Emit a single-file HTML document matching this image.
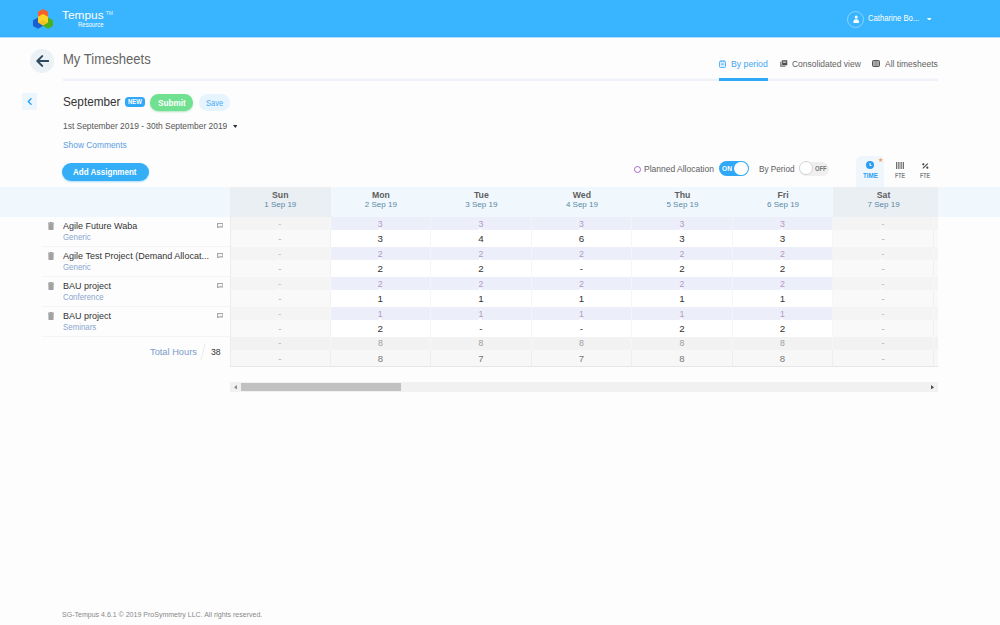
<!DOCTYPE html>
<html lang="en">
<head>
<meta charset="utf-8">
<title>My Timesheets - Tempus Resource</title>
<style>
*{box-sizing:border-box;margin:0;padding:0}
html,body{width:1000px;height:625px;overflow:hidden;background:#fdfdfd}
body{position:relative;font-family:"Liberation Sans",sans-serif;color:#333;font-size:9px;line-height:1}
.a{position:absolute;white-space:nowrap}
.topbar{left:0;top:0;width:1000px;height:38px;background:linear-gradient(#39b4fe 0,#39b4fe 36px,#32aefa 36px,#32aefa 37px,#b4e2ff 37px,#b4e2ff 38px)}
.w{color:#fff}
/* table */
.hdr{left:0;top:187px;width:1000px;height:29.5px;background:#f0f8fd}
.hc{top:187px;height:30px;width:100.55px;text-align:center}
.hc.we{background:#e9eff3}
.hc b{position:absolute;left:0;right:0;top:4px;font-size:8.7px;font-weight:bold;color:#5e5e5e;display:block}
.hc i{position:absolute;left:0;right:0;top:14.2px;font-size:8px;font-style:normal;color:#5a88a6;display:block}
.row{left:230px;width:708px;overflow:hidden}
.row span{position:absolute;top:0;height:100%;width:100.55px;text-align:center;border-right:1px solid rgba(255,255,255,.3)}
.p span::after{content:"";position:absolute;left:50%;bottom:0;margin-left:-2.6px;border:2.6px solid transparent;border-bottom:2px solid #fff;border-top:0}
.p span.we::after{border-bottom-color:#f9f9f9}
.p{height:13px;font-size:8.8px;color:#b498c5;line-height:14px}
.p span{background:#eceffa}
.p span.we,.p span.x{background:#f4f4f4;color:#b8b8b8}
.v{height:17px;font-size:9.8px;color:#333;line-height:17px}
.v span{background:#fff;border-right:1px solid #f6f6f6}
.v span.we,.v span.x{background:#f9f9f9;color:#adadad;border-right:1px solid #f1f1f1}
.t1{height:13px;font-size:8.7px;color:#9c9c9c;line-height:13.6px}
.t1 span{background:#f2f2f2}
.t2{height:17px;font-size:9.6px;color:#777;line-height:17.4px}
.t2 span{background:#f7f7f7;border-right:1px solid #ededed}
.t1 .c0,.t1 .c6,.t1 .c7,.t2 .c0,.t2 .c6,.t2 .c7{color:#aaa}
.c0{left:0}.c1{left:100.55px}.c2{left:201.1px}.c3{left:301.65px}.c4{left:402.2px}.c5{left:502.75px}.c6{left:603.3px}.c7{left:703.85px}
.nm{left:62.5px;font-size:9.3px;color:#333}
.sb{left:62.5px;font-size:8.4px;color:#8aa6cf;transform:scaleX(.94);transform-origin:0 0}
.sep{left:42px;width:188px;height:1px;background:#f4f4f4}
</style>
</head>
<body>
<!-- top bar -->
<div class="a topbar"></div>
<svg class="a" style="left:33px;top:9px" width="20" height="20" viewBox="0 0 20 20">
  <polygon points="10,0 15,2.8 15,8.6 10,11.4 5,8.6 5,2.8" fill="#f4622a"/>
  <polygon points="5,8.4 10,11.2 10,17 5,19.8 0,17 0,11.2" fill="#1a5fd0"/>
  <polygon points="15,8.4 20,11.2 20,17 15,19.8 10,17 10,11.2" fill="#4caf1c"/>
  <polygon points="10,5 15,7.8 15,13.6 10,16.4 5,13.6 5,7.8" fill="#fdd328"/>
  <polygon points="5,13.6 10,10.9 15,13.6 10,16.4" fill="#e8b820" opacity=".55"/>
</svg>
<span class="a w" id="tempus" style="left:62.4px;top:9.6px;font-size:11.5px;transform:scaleX(1.0327);transform-origin:0 0">Tempus</span>
<span class="a w" id="tm" style="left:105.8px;top:10.8px;font-size:5px;opacity:.85">TM</span>
<span class="a w" id="resource" style="left:78px;top:22.4px;font-size:6.5px;transform:scaleX(0.9235);transform-origin:0 0">Resource</span>

<!-- user -->
<div class="a" style="left:847px;top:10.5px;width:17px;height:17px;border-radius:50%;border:1px solid rgba(255,255,255,.4)"></div>
<svg class="a" style="left:852.8px;top:14.6px" width="6.4" height="8.6" viewBox="0 0 8 10" preserveAspectRatio="none"><circle cx="4" cy="2.4" r="1.9" fill="#fff"/><path d="M0.6 9.2 V7.2 Q0.6 5 4 5 Q7.4 5 7.4 7.2 V9.2 Z" fill="#fff"/></svg>
<span class="a w" id="user" style="left:867.5px;top:14px;font-size:8.6px;transform:scaleX(0.8931);transform-origin:0 0">Catharine Bo...</span>
<svg class="a" style="left:926.6px;top:17.5px" width="4.6" height="2.8" viewBox="0 0 4.6 2.8"><path d="M.2 0H4.4L2.3 2.7Z" fill="#fff" stroke="#fff" stroke-width=".4" stroke-linejoin="round"/></svg>

<!-- title row -->
<div class="a" style="left:30px;top:49px;width:23.5px;height:23.5px;border-radius:50%;background:#ecf1f5"></div>
<svg class="a" style="left:35.5px;top:55px" width="13" height="12" viewBox="0 0 13 12"><path d="M6.2 1.1 L1.3 6 L6.2 10.9 M1.6 6 H12.2" fill="none" stroke="#2f4a5e" stroke-width="2" stroke-linecap="round" stroke-linejoin="round"/></svg>
<span class="a" id="title" style="left:62.7px;top:52px;font-size:14.2px;color:#646464;transform:scaleX(0.9192);transform-origin:0 0">My Timesheets</span>
<div class="a" style="left:62.5px;top:78px;width:875px;height:3px;background:linear-gradient(#f7f9fc 0,#f7f9fc 1px,#eef1f7 1px,#eef1f7 3px)"></div>
<div class="a" style="left:719px;top:78px;width:49px;height:3px;background:#2fa9f7"></div>

<!-- tabs -->
<svg class="a" style="left:719px;top:60px" width="7" height="8" viewBox="0 0 7 8"><rect x=".5" y="1.2" width="6" height="6.3" rx="1" fill="#d9edfd" stroke="#55b2f6" stroke-width="1"/><rect x="1.6" y="0" width="1" height="2" fill="#55b2f6"/><rect x="4.4" y="0" width="1" height="2" fill="#55b2f6"/><rect x="2" y="3.6" width="3" height="1" fill="#55b2f6"/></svg>
<span class="a" id="tab1" style="left:731.2px;top:59.5px;font-size:9.2px;color:#44a6f2;transform:scaleX(0.9478);transform-origin:0 0">By period</span>
<svg class="a" style="left:780px;top:60px" width="7.5" height="7.5" viewBox="0 0 7.5 7.5"><rect x="0" y="1.6" width="5.6" height="5.4" rx=".8" fill="#8e8e8e"/><rect x="1.7" y="0" width="5.8" height="5.6" rx=".8" fill="#4b4b4b" stroke="#fff" stroke-width=".5"/><rect x="3" y="1.4" width="3.2" height="1.6" fill="#bbb"/></svg>
<span class="a" id="tab2" style="left:792px;top:59.5px;font-size:9.2px;color:#626262;transform:scaleX(0.9225);transform-origin:0 0">Consolidated view</span>
<svg class="a" style="left:872px;top:60px" width="8" height="7" viewBox="0 0 8 7"><rect x=".5" y=".5" width="7" height="6" rx=".9" fill="#a8a8a8" stroke="#555" stroke-width="1"/><rect x="3.7" y="1" width=".6" height="5" fill="#777"/></svg>
<span class="a" id="tab3" style="left:884.5px;top:59.5px;font-size:9.2px;color:#626262;transform:scaleX(0.923);transform-origin:0 0">All timesheets</span>

<!-- period header -->
<div class="a" style="left:22px;top:92.5px;width:15px;height:17.5px;background:#edf6fd"></div>
<svg class="a" style="left:27px;top:98px" width="5" height="7" viewBox="0 0 5 7"><path d="M4 .8 L1.3 3.5 L4 6.2" fill="none" stroke="#2a9df4" stroke-width="1.4" stroke-linecap="round" stroke-linejoin="round"/></svg>
<span class="a" id="sept" style="left:63.4px;top:95.5px;font-size:12px;color:#333;transform:scaleX(0.9778);transform-origin:0 0">September</span>
<div class="a" style="left:125px;top:97px;width:19.5px;height:9.5px;border-radius:3.5px;background:#2fa9f7"></div>
<span class="a w" id="new" style="left:127.8px;top:98.6px;font-size:6.4px;font-weight:bold;transform:scaleX(0.9382);transform-origin:0 0">NEW</span>
<div class="a" style="left:150.3px;top:93.5px;width:42.4px;height:17.6px;border-radius:9px;background:#70e091;box-shadow:0 1px 2px rgba(90,200,120,.45)"></div>
<span class="a w" id="submit" style="left:157.9px;top:97.8px;font-size:9.4px;font-weight:bold;transform:scaleX(0.8716);transform-origin:0 0">Submit</span>
<div class="a" style="left:199px;top:94px;width:30.5px;height:17px;border-radius:9px;background:#e6f4fe"></div>
<span class="a" id="save" style="left:205.6px;top:98px;font-size:9.4px;color:#4ba9f1;transform:scaleX(0.8);transform-origin:0 0">Save</span>
<span class="a" id="dates" style="left:62.7px;top:122px;font-size:9px;color:#555;transform:scaleX(0.9355);transform-origin:0 0">1st September 2019 - 30th September 2019</span>
<svg class="a" style="left:232.8px;top:125.2px" width="4.6" height="3" viewBox="0 0 4.6 3"><path d="M0 0H4.6L2.3 3Z" fill="#333"/></svg>
<span class="a" id="showc" style="left:62.7px;top:140.5px;font-size:9px;color:#5b9ce2;transform:scaleX(0.9295);transform-origin:0 0">Show Comments</span>
<div class="a" style="left:62.4px;top:163px;width:86.8px;height:17.5px;border-radius:9px;background:#34aef6;box-shadow:0 1px 2px rgba(52,174,246,.4)"></div>
<span class="a w" id="adda" style="left:73.3px;top:167.5px;font-size:8.8px;font-weight:bold;transform:scaleX(0.9126);transform-origin:0 0">Add Assignment</span>

<!-- toggles -->
<div class="a" style="left:633.6px;top:166px;width:7.2px;height:7.2px;border-radius:50%;border:1.7px solid #a36bd3"></div>
<span class="a" id="planned" style="left:643.7px;top:164.5px;font-size:9px;color:#606060;transform:scaleX(0.9438);transform-origin:0 0">Planned Allocation</span>
<div class="a" style="left:718.5px;top:160.5px;width:30.5px;height:15px;border-radius:8px;background:#2fa9f7"></div>
<div class="a" style="left:734px;top:161.5px;width:13.5px;height:13.5px;border-radius:50%;background:#fff"></div>
<span class="a w" id="on" style="left:721.6px;top:165.7px;font-size:6.8px;font-weight:bold;transform:scaleX(0.9703);transform-origin:0 0">ON</span>
<span class="a" id="byp" style="left:758.5px;top:164.5px;font-size:9px;color:#606060;transform:scaleX(0.9095);transform-origin:0 0">By Period</span>
<div class="a" style="left:799px;top:161.5px;width:29.5px;height:14px;border-radius:7px;background:#efefef"></div>
<div class="a" style="left:799.3px;top:161.3px;width:14.2px;height:14.2px;border-radius:50%;background:#fff;border:1px solid #d4d4d4"></div>
<span class="a" id="off" style="left:814.5px;top:165.7px;font-size:6.8px;font-weight:bold;color:#777;transform:scaleX(0.8607);transform-origin:0 0">OFF</span>

<!-- view switch -->
<div class="a" style="left:856.4px;top:156px;width:27.8px;height:32px;border-radius:5px 5px 0 0;background:#eff7fd"></div>
<svg class="a" style="left:866.2px;top:161px" width="8" height="8" viewBox="0 0 8 8"><circle cx="4" cy="4" r="4" fill="#2a9df4"/><path d="M4 2V4.5H5.5" fill="none" stroke="#fff" stroke-width="1"/></svg>
<span class="a" style="left:877.5px;top:157px;font-size:6px;color:#f5a14a">★</span>
<span class="a" id="time" style="left:862.5px;top:173.3px;font-size:6.6px;font-weight:bold;color:#2a9df4;transform:scaleX(0.9451);transform-origin:0 0">TIME</span>
<svg class="a" style="left:896px;top:161.6px" width="8" height="7.3" viewBox="0 0 8 7.3"><rect x="0" width="1.3" height="7.3" fill="#707070"/><rect x="2.2" width="1.3" height="7.3" fill="#707070"/><rect x="4.5" width="1.3" height="7.3" fill="#707070"/><rect x="6.7" width="1.3" height="7.3" fill="#707070"/></svg>
<span class="a" id="fte1" style="left:894.9px;top:173.3px;font-size:6.6px;font-weight:bold;color:#828282;transform:scaleX(0.794);transform-origin:0 0">FTE</span>
<svg class="a" style="left:922.3px;top:162.5px" width="6.6" height="6" viewBox="0 0 6.6 6"><path d="M.8 5.4L5.8.6" stroke="#444" stroke-width="1.1" fill="none"/><circle cx="1.3" cy="1.3" r="1.1" fill="#444"/><circle cx="5.3" cy="4.7" r="1.1" fill="#444"/></svg>
<span class="a" id="fte2" style="left:920.3px;top:173.3px;font-size:6.6px;font-weight:bold;color:#828282;transform:scaleX(0.794);transform-origin:0 0">FTE</span>

<!-- table header -->
<div class="a hdr"></div>
<div class="a" style="left:230px;top:187px;width:708px;height:30px;overflow:hidden">
<div class="a hc we" style="left:0;top:0"><b>Sun</b><i>1 Sep 19</i></div>
<div class="a hc" style="left:100.55px;top:0"><b>Mon</b><i>2 Sep 19</i></div>
<div class="a hc" style="left:201.1px;top:0"><b>Tue</b><i>3 Sep 19</i></div>
<div class="a hc" style="left:301.65px;top:0"><b>Wed</b><i>4 Sep 19</i></div>
<div class="a hc" style="left:402.2px;top:0"><b>Thu</b><i>5 Sep 19</i></div>
<div class="a hc" style="left:502.75px;top:0"><b>Fri</b><i>6 Sep 19</i></div>
<div class="a hc we" style="left:603.3px;top:0"><b>Sat</b><i>7 Sep 19</i></div>
<div class="a hc we" style="left:703.85px;top:0"><b>Sun</b><i>8 Sep 19</i></div>
</div>

<!-- rows -->
<div class="a row p" style="top:217px"><span class="c0 we">-</span><span class="c1">3</span><span class="c2">3</span><span class="c3">3</span><span class="c4">3</span><span class="c5">3</span><span class="c6 we">-</span><span class="c7 we">-</span></div>
<div class="a row v" style="top:230px"><span class="c0 we">-</span><span class="c1">3</span><span class="c2">4</span><span class="c3">6</span><span class="c4">3</span><span class="c5">3</span><span class="c6 we">-</span><span class="c7 we">-</span></div>
<div class="a row p" style="top:247px"><span class="c0 we">-</span><span class="c1">2</span><span class="c2">2</span><span class="c3">2</span><span class="c4">2</span><span class="c5">2</span><span class="c6 we">-</span><span class="c7 we">-</span></div>
<div class="a row v" style="top:260px"><span class="c0 we">-</span><span class="c1">2</span><span class="c2">2</span><span class="c3">-</span><span class="c4">2</span><span class="c5">2</span><span class="c6 we">-</span><span class="c7 we">-</span></div>
<div class="a row p" style="top:277px"><span class="c0 we">-</span><span class="c1">2</span><span class="c2">2</span><span class="c3">2</span><span class="c4">2</span><span class="c5">2</span><span class="c6 we">-</span><span class="c7 we">-</span></div>
<div class="a row v" style="top:290px"><span class="c0 we">-</span><span class="c1">1</span><span class="c2">1</span><span class="c3">1</span><span class="c4">1</span><span class="c5">1</span><span class="c6 we">-</span><span class="c7 we">-</span></div>
<div class="a row p" style="top:307px"><span class="c0 we">-</span><span class="c1">1</span><span class="c2">1</span><span class="c3">1</span><span class="c4">1</span><span class="c5">1</span><span class="c6 we">-</span><span class="c7 we">-</span></div>
<div class="a row v" style="top:320px"><span class="c0 we">-</span><span class="c1">2</span><span class="c2">-</span><span class="c3">-</span><span class="c4">2</span><span class="c5">2</span><span class="c6 we">-</span><span class="c7 we">-</span></div>
<div class="a row t1" style="top:337px"><span class="c0">-</span><span class="c1">8</span><span class="c2">8</span><span class="c3">8</span><span class="c4">8</span><span class="c5">8</span><span class="c6">-</span><span class="c7">-</span></div>
<div class="a row t2" style="top:350px"><span class="c0">-</span><span class="c1">8</span><span class="c2">7</span><span class="c3">7</span><span class="c4">8</span><span class="c5">8</span><span class="c6">-</span><span class="c7">-</span></div>
<div class="a" style="left:230px;top:366px;width:708px;height:1px;background:#e6e6e6"></div>
<div class="a" style="left:230px;top:217px;width:1px;height:150px;background:#ececec"></div>

<!-- left labels -->
<span class="a nm" id="n1" style="top:221.6px;transform:scaleX(0.968);transform-origin:0 0">Agile Future Waba</span><span class="a sb" style="top:232.9px">Generic</span>
<span class="a nm" id="n2" style="top:251.6px;transform:scaleX(0.972);transform-origin:0 0">Agile Test Project (Demand Allocat...</span><span class="a sb" style="top:262.9px">Generic</span>
<span class="a nm" id="n3" style="top:281.6px;transform:scaleX(.968);transform-origin:0 0">BAU project</span><span class="a sb" style="top:292.9px">Conference</span>
<span class="a nm" id="n4" style="top:311.6px;transform:scaleX(.968);transform-origin:0 0">BAU project</span><span class="a sb" style="top:322.9px">Seminars</span>
<svg class="a" style="left:48.2px;top:221.8px" width="6" height="8" viewBox="0 0 6 8"><rect x="1.8" y="0" width="2.4" height="1" rx=".3" fill="#9c9c9c"/><rect x="0" y=".6" width="6" height="1.2" rx=".4" fill="#9c9c9c"/><rect x=".4" y="1.6" width="5.2" height="6.3" rx=".7" fill="#a2a2a2"/></svg><svg class="a" style="left:217px;top:223px" width="6.4" height="5.4" viewBox="0 0 6.4 5.4"><path d="M.5 .5H5.9V3.9H2L.5 5.1Z" fill="#f6f6f6" stroke="#a6a6a6" stroke-width="1.1" stroke-linejoin="round"/></svg>
<svg class="a" style="left:48.2px;top:251.8px" width="6" height="8" viewBox="0 0 6 8"><rect x="1.8" y="0" width="2.4" height="1" rx=".3" fill="#9c9c9c"/><rect x="0" y=".6" width="6" height="1.2" rx=".4" fill="#9c9c9c"/><rect x=".4" y="1.6" width="5.2" height="6.3" rx=".7" fill="#a2a2a2"/></svg><svg class="a" style="left:217px;top:253px" width="6.4" height="5.4" viewBox="0 0 6.4 5.4"><path d="M.5 .5H5.9V3.9H2L.5 5.1Z" fill="#f6f6f6" stroke="#a6a6a6" stroke-width="1.1" stroke-linejoin="round"/></svg>
<svg class="a" style="left:48.2px;top:281.8px" width="6" height="8" viewBox="0 0 6 8"><rect x="1.8" y="0" width="2.4" height="1" rx=".3" fill="#9c9c9c"/><rect x="0" y=".6" width="6" height="1.2" rx=".4" fill="#9c9c9c"/><rect x=".4" y="1.6" width="5.2" height="6.3" rx=".7" fill="#a2a2a2"/></svg><svg class="a" style="left:217px;top:283px" width="6.4" height="5.4" viewBox="0 0 6.4 5.4"><path d="M.5 .5H5.9V3.9H2L.5 5.1Z" fill="#f6f6f6" stroke="#a6a6a6" stroke-width="1.1" stroke-linejoin="round"/></svg>
<svg class="a" style="left:48.2px;top:311.8px" width="6" height="8" viewBox="0 0 6 8"><rect x="1.8" y="0" width="2.4" height="1" rx=".3" fill="#9c9c9c"/><rect x="0" y=".6" width="6" height="1.2" rx=".4" fill="#9c9c9c"/><rect x=".4" y="1.6" width="5.2" height="6.3" rx=".7" fill="#a2a2a2"/></svg><svg class="a" style="left:217px;top:313px" width="6.4" height="5.4" viewBox="0 0 6.4 5.4"><path d="M.5 .5H5.9V3.9H2L.5 5.1Z" fill="#f6f6f6" stroke="#a6a6a6" stroke-width="1.1" stroke-linejoin="round"/></svg>
<div class="a sep" style="top:246px"></div><div class="a sep" style="top:276px"></div><div class="a sep" style="top:306px"></div><div class="a sep" style="top:336px"></div>
<span class="a" id="toth" style="left:150.1px;top:347.8px;font-size:9px;color:#7b9bcc;transform:scaleX(1.0301);transform-origin:0 0">Total Hours</span>
<svg class="a" style="left:200px;top:343px" width="6" height="18" viewBox="0 0 6 18"><path d="M5 .5L1 17.5" stroke="#e9e9e9" stroke-width=".9" fill="none"/></svg>
<span class="a" id="tot" style="left:211px;top:347.8px;font-size:9.3px;color:#333;transform:scaleX(0.9378);transform-origin:0 0">38</span>

<!-- scrollbar -->
<div class="a" style="left:230px;top:382px;width:708px;height:10px;background:#f1f1f1"></div>
<div class="a" style="left:240.6px;top:383px;width:160.4px;height:8px;background:#c1c1c1"></div>
<svg class="a" style="left:233.6px;top:384.9px" width="3" height="4.6" viewBox="0 0 3 4.6"><path d="M3 0V4.6L0 2.3Z" fill="#8c8c8c"/></svg>
<svg class="a" style="left:931.3px;top:384.9px" width="3" height="4.6" viewBox="0 0 3 4.6"><path d="M0 0V4.6L3 2.3Z" fill="#505050"/></svg>

<!-- footer -->
<span class="a" id="foot" style="left:62.3px;top:611.2px;font-size:7px;color:#888;transform:scaleX(1.0031);transform-origin:0 0">SG-Tempus 4.6.1 © 2019 ProSymmetry LLC. All rights reserved.</span>
</body>
</html>
